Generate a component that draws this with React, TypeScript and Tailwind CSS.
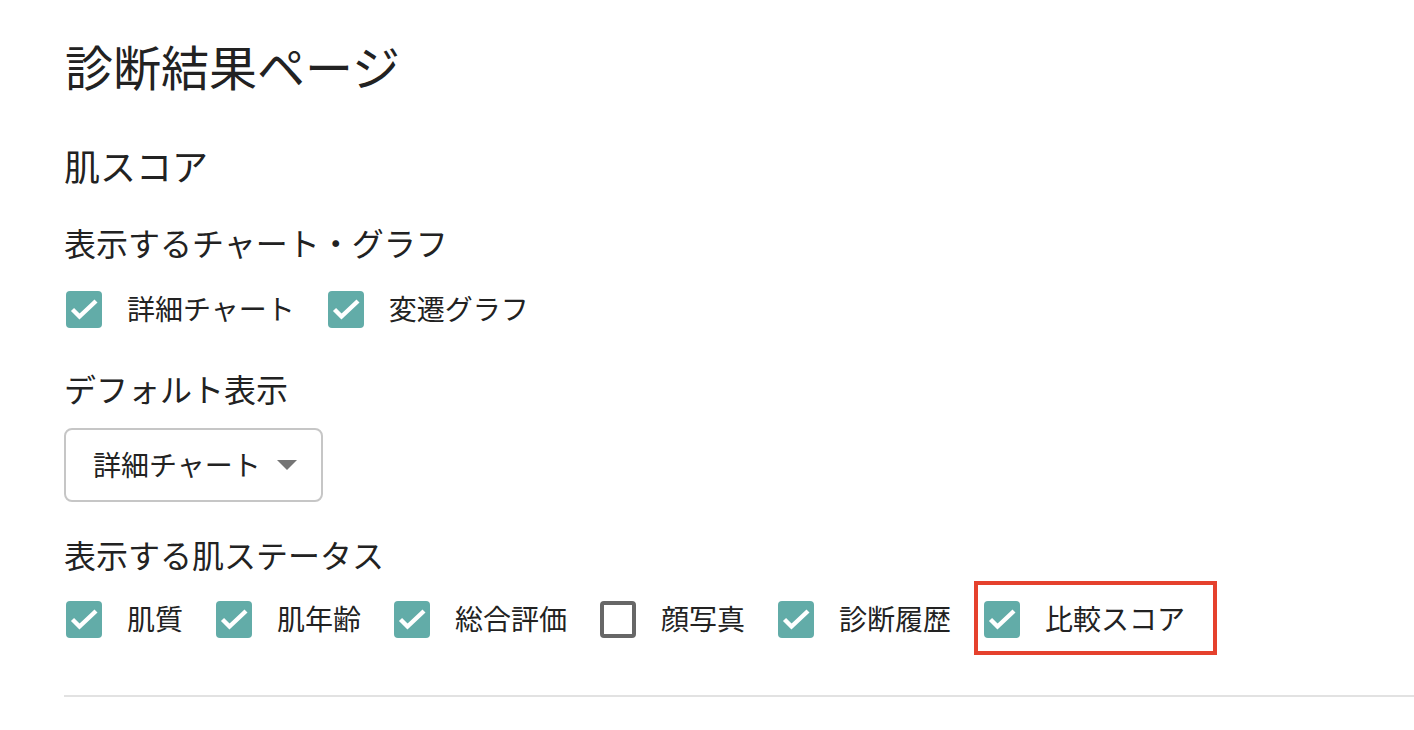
import React from "react";

const font = { fontFamily: '"Noto Sans CJK JP", "Noto Sans", sans-serif' };

function Check({ checked }: { checked: boolean }) {
  if (!checked) {
    return (
      <span className="ml-[2px] flex h-[37px] w-[36px] shrink-0 items-center justify-center">
        <span className="box-border block h-[37px] w-[36px] rounded-[4px] border-[4px] border-[#676767] bg-white" />
      </span>
    );
  }
  return (
    <span className="ml-[2px] flex h-[37px] w-[36px] shrink-0 rounded-[4px] bg-[#62aca8]">
      <svg width="36" height="37" viewBox="0 0 36 37" fill="none">
        <path d="M6.5 18.5 L13.5 25.5 L30 10" stroke="white" strokeWidth="4.4" strokeLinecap="butt" strokeLinejoin="miter" />
      </svg>
    </span>
  );
}

function Item({ label, checked, last, highlight }: { label: string; checked: boolean; last?: boolean; highlight?: boolean }) {
  return (
    <div className={`relative flex items-center ${last ? "" : "mr-[31px]"}`}>
      <Check checked={checked} />
      <span className="mb-[4px] ml-[25px] text-[28px] leading-[28px] text-[#222]">{label}</span>
      {highlight && (
        <span className="pointer-events-none absolute left-[-8px] top-[-20px] h-[74px] w-[243px] border-[4px] border-[#e5412d]" />
      )}
    </div>
  );
}

export default function App() {
  return (
    <div className="h-[730px] w-[1414px] overflow-hidden bg-white" style={font}>
      <div className="flex flex-col pl-[64px] pt-[41px] text-[#222]">
        <h1 className="ml-[1px] text-[48px] leading-[48px] font-normal">診断結果ページ</h1>
        <h2 className="mt-[58px] text-[36px] leading-[36px] font-normal">肌スコア</h2>
        <h3 className="mt-[43px] text-[32px] leading-[32px] font-normal">表示するチャート・グラフ</h3>
        <div className="mt-[33px] flex items-center">
          <Item label="詳細チャート" checked />
          <Item label="変遷グラフ" checked last />
        </div>
        <h3 className="mt-[44px] text-[32px] leading-[32px] font-normal">デフォルト表示</h3>
        <div className="mt-[24px] box-border flex h-[74px] w-[259px] items-center rounded-[8px] border-[2px] border-[#c6c6c6] pl-[27px]">
          <span className="mb-[3px] text-[28px] leading-[28px] text-[#222]">詳細チャート</span>
          <svg className="ml-[16px]" width="20" height="10" viewBox="0 0 20 10">
            <path d="M0 0 H20 L10 10 Z" fill="#757575" />
          </svg>
        </div>
        <h3 className="mt-[36px] text-[32px] leading-[32px] font-normal">表示する肌ステータス</h3>
        <div className="mt-[31px] flex items-center">
          <Item label="肌質" checked />
          <Item label="肌年齢" checked />
          <Item label="総合評価" checked />
          <Item label="顔写真" checked={false} />
          <Item label="診断履歴" checked />
          <Item label="比較スコア" checked last highlight />
        </div>
        <div className="mt-[57px] h-[2px] w-full bg-[#e2e2e2]" />
      </div>
    </div>
  );
}
